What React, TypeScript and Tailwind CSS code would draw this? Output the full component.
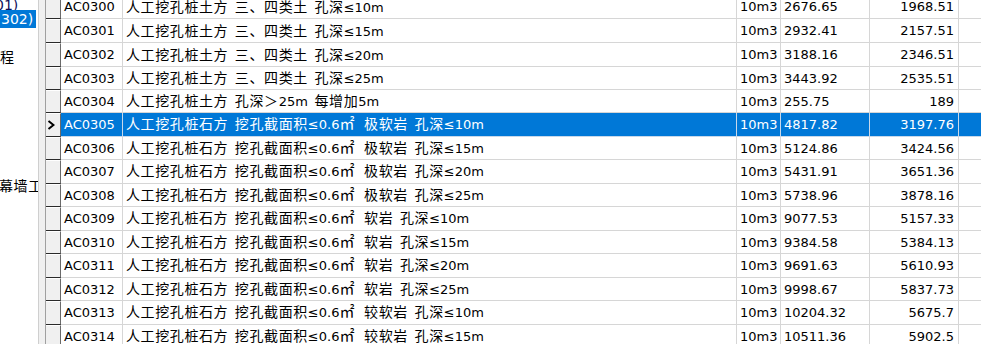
import React from 'react';

type Row = { code: string; name: string; unit: string; price: string; value: string };

const dig = '人工挖孔桩石方 挖孔截面积≤0.6㎡';

const rows: Row[] = [
    { code: 'AC0300', name: '人工挖孔桩土方 三、四类土 孔深≤10m', unit: '10m3', price: '2676.65', value: '1968.51' },
    { code: 'AC0301', name: '人工挖孔桩土方 三、四类土 孔深≤15m', unit: '10m3', price: '2932.41', value: '2157.51' },
    { code: 'AC0302', name: '人工挖孔桩土方 三、四类土 孔深≤20m', unit: '10m3', price: '3188.16', value: '2346.51' },
    { code: 'AC0303', name: '人工挖孔桩土方 三、四类土 孔深≤25m', unit: '10m3', price: '3443.92', value: '2535.51' },
    { code: 'AC0304', name: '人工挖孔桩土方 孔深＞25m 每增加5m', unit: '10m3', price: '255.75', value: '189' },
    { code: 'AC0305', name: `${dig} 极软岩 孔深≤10m`, unit: '10m3', price: '4817.82', value: '3197.76' },
    { code: 'AC0306', name: `${dig} 极软岩 孔深≤15m`, unit: '10m3', price: '5124.86', value: '3424.56' },
    { code: 'AC0307', name: `${dig} 极软岩 孔深≤20m`, unit: '10m3', price: '5431.91', value: '3651.36' },
    { code: 'AC0308', name: `${dig} 极软岩 孔深≤25m`, unit: '10m3', price: '5738.96', value: '3878.16' },
    { code: 'AC0309', name: `${dig} 软岩 孔深≤10m`, unit: '10m3', price: '9077.53', value: '5157.33' },
    { code: 'AC0310', name: `${dig} 软岩 孔深≤15m`, unit: '10m3', price: '9384.58', value: '5384.13' },
    { code: 'AC0311', name: `${dig} 软岩 孔深≤20m`, unit: '10m3', price: '9691.63', value: '5610.93' },
    { code: 'AC0312', name: `${dig} 软岩 孔深≤25m`, unit: '10m3', price: '9998.67', value: '5837.73' },
    { code: 'AC0313', name: `${dig} 较软岩 孔深≤10m`, unit: '10m3', price: '10204.32', value: '5675.7' },
    { code: 'AC0314', name: `${dig} 较软岩 孔深≤15m`, unit: '10m3', price: '10511.36', value: '5902.5' },
];

// row pitch in the picture is about 23.5px
const heights = ['h-[24px]', 'h-[24px]', 'h-[24px]', 'h-[23px]', 'h-[23px]', 'h-[24px]', 'h-[23px]', 'h-[24px]', 'h-[23px]', 'h-[24px]', 'h-[23px]', 'h-[24px]', 'h-[23px]', 'h-[24px]', 'h-[23px]'];

const SELECTED = 5;

const SPLIT = /(㎡|[\u3000-\u303f\u4e00-\u9fff\uff00-\uffef]+)/;

// CJK runs sit a little wider apart than the latin text, like the original grid font
function Txt({ text, spaced }: { text: string; spaced?: boolean }) {
    const parts = text.split(SPLIT);
    return (
        <span className={`whitespace-pre ${spaced ? '[word-spacing:2.5px]' : ''}`}>
            {parts.map((p, i) => {
                if (i % 2 === 0) return <span key={i}>{p}</span>;
                if (p === '㎡') return <span key={i} className="text-[15px] mr-[3px]">{p}</span>;
                return <span key={i} className="text-[14px] tracking-[0.6px]">{p}</span>;
            })}
        </span>
    );
}

function Indicator({ active }: { active: boolean }) {
    return (
        <div className="w-[15px] shrink-0 h-full bg-[#f0f0f0] border-t border-t-white border-b border-b-[#2a2a2a] border-r border-r-[#6a6a6a] flex items-center justify-start pl-[1px]">
            {active && (
                <svg width="8" height="10" viewBox="0 0 8 10">
                    <path d="M1.5 1 L6.5 5 L1.5 9" fill="none" stroke="#000" strokeWidth="2" />
                </svg>
            )}
        </div>
    );
}

export default function App() {
    return (
        <div
            className="w-[981px] h-[344px] overflow-hidden bg-white flex text-[13px] text-black leading-none"
            style={{ fontFamily: '"DejaVu Sans", "Noto Sans CJK SC", sans-serif' }}
        >
            {/* tree panel, scrolled sideways so only the tail of each node shows */}
            <div className="w-[38px] shrink-0 overflow-hidden flex flex-col text-[14px]">
                <div className="-mt-[2px] h-[12px] whitespace-nowrap -ml-[5px] text-[#10105a]">01)</div>
                <div className="mt-[0px] h-[18px] w-[36px] bg-[#0078d7] text-white whitespace-nowrap flex items-center overflow-hidden pl-[1px]">
                    302)
                </div>
                <div className="mt-[20px] h-[18px] whitespace-nowrap flex items-center">
                    <Txt text="程" />
                </div>
                <div className="mt-[111px] h-[18px] whitespace-nowrap flex items-center -ml-[1px]">
                    <Txt text="幕墙工程" />
                </div>
            </div>

            {/* splitter */}
            <div className="w-[8px] shrink-0 h-full bg-[#f0f0f0] border-l border-l-[#cfcfcf] border-r border-r-[#a0a0a0]" />

            {/* grid */}
            <div className="flex-1 flex flex-col -mt-[5px]">
                {rows.map((r, i) => {
                    const sel = i === SELECTED;
                    const cell = `h-full shrink-0 border-r border-b flex items-center pl-[3px] whitespace-nowrap overflow-hidden ${sel ? 'border-[#c8d8ea]' : 'border-[#d6d6d6]'}`;
                    return (
                        <div key={r.code} className={`flex shrink-0 ${heights[i]} ${sel ? 'bg-[#0078d7] text-white' : ''}`}>
                            <Indicator active={sel} />
                            <div className={`${cell} w-[62px]`}>{r.code}</div>
                            <div className={`${cell} w-[614px]`}><Txt text={r.name} spaced /></div>
                            <div className={`${cell} w-[44px]`}>{r.unit}</div>
                            <div className={`${cell} w-[89px]`}>{r.price}</div>
                            <div className={`${cell} w-[89px] justify-end pr-[4px]`}>{r.value}</div>
                            <div className={`h-full flex-1 border-b ${sel ? 'border-[#c8d8ea]' : 'border-[#d6d6d6]'}`} />
                        </div>
                    );
                })}
            </div>
        </div>
    );
}
